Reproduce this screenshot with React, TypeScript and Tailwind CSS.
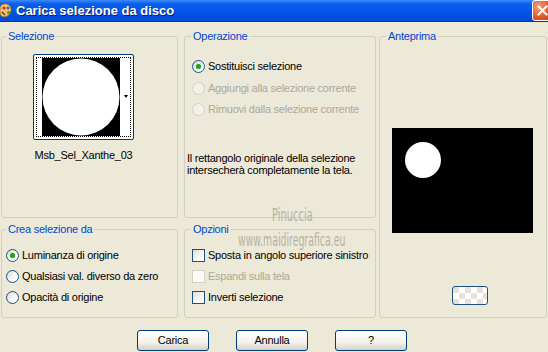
import clsx from "clsx";

const font = "font-['Liberation_Sans',Arial,sans-serif]";

function Radio({ checked, disabled }: { checked?: boolean; disabled?: boolean }) {
  return (
    <span
      className={clsx(
        "flex size-[13px] shrink-0 items-center justify-center rounded-full border",
        disabled
          ? "border-[#D3D1C5] bg-[#F2F0E8]"
          : "border-[#1C5180] bg-[linear-gradient(135deg,#D8D7D0,#FFFFFF_70%)]"
      )}
    >
      {checked && <span className="size-[5px] rounded-full bg-[#21A121] shadow-[0_0_1px_#5CD65C]" />}
    </span>
  );
}

function Check({ disabled }: { disabled?: boolean }) {
  return (
    <span
      className={clsx(
        "size-[13px] shrink-0 border",
        disabled
          ? "border-[#D3D1C5] bg-[#FAFAF6]"
          : "border-[#1C5180] bg-[linear-gradient(135deg,#DCDCD7,#FFFFFF_75%)]"
      )}
    />
  );
}

function Row({
  children,
  label,
  disabled,
}: {
  children: React.ReactNode;
  label: string;
  disabled?: boolean;
}) {
  return (
    <div className="flex h-[21px] items-center gap-[3px]">
      {children}
      <span className={disabled ? "text-[#ACA899]" : "text-black"}>{label}</span>
    </div>
  );
}

function Group({
  title,
  className,
  legend = "ml-[6px]",
  children,
}: {
  title: string;
  className?: string;
  legend?: string;
  children: React.ReactNode;
}) {
  return (
    <fieldset className={clsx("rounded-[3px] border border-[#D0D0BF]", className)}>
      <legend className={clsx("px-[2px] leading-[13px] text-[#0046D5]", legend)}>{title}</legend>
      {children}
    </fieldset>
  );
}

function XpButton({ children, className }: { children: React.ReactNode; className?: string }) {
  return (
    <button
      className={clsx(
        "flex items-center justify-center rounded-[3px] border border-[#003C74] bg-[linear-gradient(180deg,#FFFFFF,#F3F2EC_60%,#D6D0C5)] text-black",
        className
      )}
    >
      {children}
    </button>
  );
}

function TitleIcon() {
  return (
    <svg width="14" height="16" viewBox="0 0 14 16">
      <path d="M1 4 Q3 0 8 1 Q13 3 12 8 Q11 13 6 14 Q1 14 1 10 Z" fill="#F2C46A" stroke="#8A5A1C" strokeWidth="0.8" />
      <circle cx="5" cy="5" r="1.6" fill="#D0301F" />
      <circle cx="9" cy="5" r="1.5" fill="#2A6AD8" />
      <circle cx="9.5" cy="9.5" r="1.5" fill="#35A035" />
      <path d="M3 9 L6 12" stroke="#5A3A10" strokeWidth="1.4" />
    </svg>
  );
}

function Thumbnail() {
  return (
    <div className="flex h-[86px] w-[101px] items-center justify-center rounded-[2px] border border-[#003C74] bg-white">
      <div className="h-[80px] w-[95px] border border-dotted border-black">
        <svg width="93" height="78" viewBox="0 0 93 78">
          <rect x="5" y="0" width="78" height="78" fill="#000" />
          <circle cx="44" cy="39" r="38.5" fill="#fff" />
          <path d="M87 37 L91 37 L89 40 Z" fill="#000" />
        </svg>
      </div>
    </div>
  );
}

export default function App() {
  return (
    <div className={clsx("relative h-[352px] w-[548px] overflow-hidden bg-[#ECE9D8] text-[11px] leading-[13px] tracking-[-0.25px]", font)}>
      <div className="flex h-[22px] items-center border-b border-[#0831A8] bg-[linear-gradient(180deg,#3C8CF8_0%,#0A5EEC_18%,#0055E8_60%,#0049D6_100%)]">
        <div className="ml-[-1px] mr-[3px]">
          <TitleIcon />
        </div>
        <span className="text-[13px] font-bold tracking-normal text-white [text-shadow:1px_1px_#0A1E6A]">
          Carica selezione da disco
        </span>
        <div className="ml-auto mr-[-5px] flex h-[21px] w-[21px] items-center justify-center rounded-[3px] border border-white bg-[radial-gradient(circle_at_30%_30%,#F0A080,#E25A2E_55%,#C33A14)]">
          <svg width="11" height="11" viewBox="0 0 11 11">
            <path d="M1.5 1.5 L9.5 9.5 M9.5 1.5 L1.5 9.5" stroke="#fff" strokeWidth="2" strokeLinecap="square" />
          </svg>
        </div>
      </div>

      <div className="flex pl-[1px] pt-[8px]">
        <div className="flex w-[177px] flex-col gap-[5px]">
          <Group title="Selezione" legend="ml-[4px]" className="h-[188px]">
            <div className="ml-[31px] mt-[11px] flex w-[101px] flex-col items-center gap-[9px]">
              <Thumbnail />
              <span>Msb_Sel_Xanthe_03</span>
            </div>
          </Group>
          <Group title="Crea selezione da" legend="ml-[4px]" className="h-[95px]">
            <div className="mt-[9px] pl-[4px]">
              <Row label="Luminanza di origine">
                <Radio checked />
              </Row>
              <Row label="Qualsiasi val. diverso da zero">
                <Radio />
              </Row>
              <Row label="Opacità di origine">
                <Radio />
              </Row>
            </div>
          </Group>
        </div>

        <div className="ml-[6px] flex w-[192px] flex-col gap-[5px]">
          <Group title="Operazione" className="h-[188px]">
            <div className="mt-[12px] pl-[7px]">
              <div className="flex h-[22px] items-center gap-[3px]">
                <Radio checked />
                <span>Sostituisci selezione</span>
              </div>
              <div className="flex h-[22px] items-center gap-[3px]">
                <Radio disabled />
                <span className="text-[#ACA899]">Aggiungi alla selezione corrente</span>
              </div>
              <div className="flex h-[21px] items-center gap-[3px]">
                <Radio disabled />
                <span className="text-[#ACA899]">Rimuovi dalla selezione corrente</span>
              </div>
            </div>
            <p className="mt-[32px] pl-[2px] leading-[12px]">
              Il rettangolo originale della selezione
              <br />
              intersecherà completamente la tela.
            </p>
          </Group>
          <Group title="Opzioni" className="h-[95px]">
            <div className="mt-[9px] pl-[7px]">
              <Row label="Sposta in angolo superiore sinistro">
                <Check />
              </Row>
              <Row label="Espandi sulla tela" disabled>
                <Check disabled />
              </Row>
              <Row label="Inverti selezione">
                <Check />
              </Row>
            </div>
          </Group>
        </div>

        <div className="ml-[3px] w-[168px]">
          <Group title="Anteprima" className="h-[288px]">
            <div className="ml-[12px] mt-[85px] h-[105px] w-[141px] bg-black">
              <svg width="141" height="105" viewBox="0 0 141 105">
                <circle cx="31" cy="32" r="18" fill="#fff" />
              </svg>
            </div>
            <div className="ml-[72px] mt-[53px] h-[19px] w-[36px] rounded-[3px] border border-[#1C5180] bg-[repeating-conic-gradient(#FFFFFF_0_25%,#E4E2DA_0_50%)] bg-[length:12px_12px]" />
          </Group>
        </div>
      </div>

      <div className="mt-[12px] flex gap-[27px] pl-[137px]">
        <XpButton className="h-[21px] w-[72px]">Carica</XpButton>
        <XpButton className="h-[21px] w-[72px]">Annulla</XpButton>
        <XpButton className="h-[21px] w-[72px]">?</XpButton>
      </div>

      <div className="pointer-events-none absolute left-[272px] top-[206px] origin-left scale-x-[0.55] font-['DejaVu_Sans',sans-serif] text-[18px] leading-[18px] tracking-normal text-[#A9A597] opacity-80">
        Pinuccia
      </div>
      <div className="pointer-events-none absolute left-[238px] top-[232px] origin-left scale-x-[0.55] font-['DejaVu_Sans',sans-serif] text-[17px] leading-[17px] tracking-normal text-[#A9A597] opacity-80">
        www.maidiregrafica.eu
      </div>
    </div>
  );
}
